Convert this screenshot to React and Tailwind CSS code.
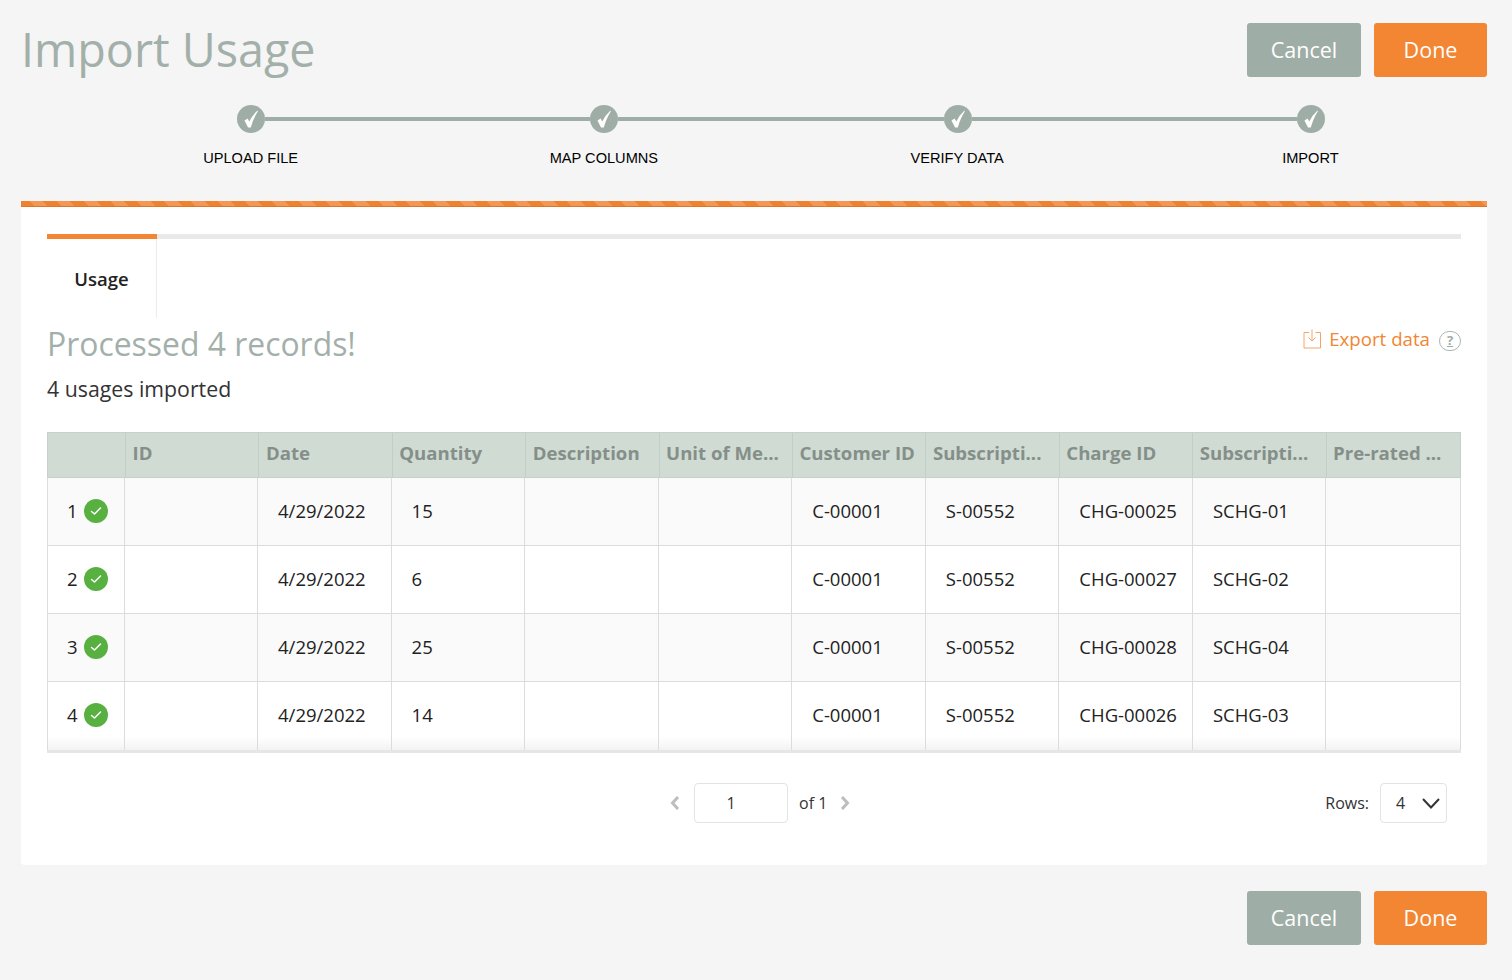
const steps = ['UPLOAD FILE', 'MAP COLUMNS', 'VERIFY DATA', 'IMPORT'];
const columns = [
  'ID',
  'Date',
  'Quantity',
  'Description',
  'Unit of Me...',
  'Customer ID',
  'Subscripti...',
  'Charge ID',
  'Subscripti...',
  'Pre-rated ...',
];
const rows = [
  { n: 1, qty: '15', charge: 'CHG-00025', sub: 'SCHG-01' },
  { n: 2, qty: '6', charge: 'CHG-00027', sub: 'SCHG-02' },
  { n: 3, qty: '25', charge: 'CHG-00028', sub: 'SCHG-04' },
  { n: 4, qty: '14', charge: 'CHG-00026', sub: 'SCHG-03' },
];

const Buttons = () => (
  <div className="flex gap-[13px]">
    <button className="w-[114px] h-[54px] rounded-[3px] bg-[#9fada7] text-white text-[21.5px]">Cancel</button>
    <button className="w-[113px] h-[54px] rounded-[3px] bg-[#f28633] text-white text-[21.5px]">Done</button>
  </div>
);

const StepCircle = () => (
  <div className="w-[28px] h-[28px] rounded-full bg-[#9fada7] flex items-center justify-center shrink-0">
    <svg width="14" height="18" viewBox="0 0 14 18">
      <path d="M0.5 10.5 L3.6 8.5 L5.3 11.5 Q8 5.5 13.5 0.5 L13.8 1.5 Q9.5 8 6.8 17.5 L4 17.5 Z" fill="#fff" />
    </svg>
  </div>
);

const Arrow = ({ d }) => (
  <svg width="10" height="14" viewBox="0 0 10 14" fill="none" stroke="#bdbdbd" strokeWidth="3">
    <path d={d} />
  </svg>
);

const Cell = ({ children, pad = 'pl-[20px]' }) => (
  <div className={`border-r border-[#dcdcdc] flex items-center pb-[2px] text-[18.5px] text-[#222] ${pad}`}>{children}</div>
);

const App = () => {
  return (
    <div className="w-[1512px] h-[980px] bg-[#f5f5f5] font-['Open_Sans',sans-serif] overflow-hidden pl-[21px] pr-[25px]">
      <div className="flex justify-between h-[77px] items-end">
        <h1 className="self-start pt-[17px] text-[46.7px] leading-[64px] font-normal text-[#a3b0aa]">Import Usage</h1>
        <Buttons />
      </div>

      <div className="flex items-center mt-[28px] ml-[216px] mr-[162px]">
        {steps.map((s, i) => (
          <div key={s} className={i < 3 ? 'flex items-center flex-1' : 'flex items-center'}>
            <StepCircle />
            {i < 3 && <div className="h-[4px] flex-1 bg-[#9fada7]" />}
          </div>
        ))}
      </div>
      <div className="flex mt-[15px] ml-[53px] font-['Liberation_Sans',sans-serif] text-[14.6px] leading-[20px] text-black">
        {steps.map((s) => (
          <div key={s} className="flex-1 text-center">{s}</div>
        ))}
      </div>

      <div className="mt-[33px] bg-white rounded-b-[4px] h-[664px]">
        <div className="h-[6px] bg-[repeating-linear-gradient(45deg,#ee8230_0,#ee8230_9.5px,#f29756_9.5px,#f29756_19px)] border-b border-[#dc762a]" />
        <div className="px-[26px] pt-[27px]">
          <div className="h-[5px] bg-[#e9e9e9]">
            <div className="w-[110px] h-[5px] bg-[#f28633]" />
          </div>
          <div className="w-[110px] h-[79px] border-r border-[#ececec] flex items-center justify-center text-[18.5px] font-semibold text-[#222]">
            Usage
          </div>

          <div className="flex justify-between">
            <div>
              <h2 className="pt-[1px] text-[31.9px] leading-[50px] font-normal text-[#a3b0aa]">Processed 4 records!</h2>
              <p className="text-[21.3px] leading-[30px] text-[#333] mt-[5px]">4 usages imported</p>
            </div>
            <div className="flex items-center h-[42px] gap-[9px] text-[#f28633] text-[18.7px]">
              <div className="flex items-center gap-[8px]">
                <svg width="18" height="20" viewBox="0 0 18 20" fill="none" stroke="#f5a468" strokeWidth="1">
                  <path d="M6 3.5 H1 V19 H17.5 V3.5 H12.5" />
                  <path d="M9 0.5 V12 M5.5 8.5 L9 12 L12.5 8.5" />
                </svg>
                <span>Export data</span>
              </div>
              <div className="w-[22px] h-[20px] rounded-full border border-[#a9b6b1] flex items-center justify-center text-[13px] font-bold underline text-[#9fada7] mt-[4px]">?</div>
            </div>
          </div>

          <div className="mt-[28px] border-b-[3px] border-[#e6e6e6]">
            <div className="grid grid-cols-[78px_repeat(10,1fr)] h-[46px] bg-[#d0dbd3] border border-[#c5d1c9]">
              <div className="border-r border-[#c2cec6]" />
              {columns.map((c, i) => (
                <div key={i} className="border-r border-[#c2cec6] last:border-r-0 flex items-center pl-[6.5px] pb-[4px] text-[18.6px] font-bold text-[#858f89] whitespace-nowrap overflow-hidden">
                  {c}
                </div>
              ))}
            </div>
            {rows.map((r, i) => (
              <div
                key={r.n}
                className={`grid grid-cols-[76.5px_repeat(10,1fr)] h-[68px] border-l border-r border-[#dcdcdc] ${i < 3 ? 'border-b' : 'bg-[linear-gradient(#fff_80%,#f3f3f3)]'} ${i % 2 === 0 ? 'bg-[#fafafa]' : 'bg-white'}`}
              >
                <Cell pad="pl-[19px] gap-[6px]">
                  <span>{r.n}</span>
                  <span className="w-[24px] h-[24px] rounded-full bg-[#58b041] flex items-center justify-center">
                    <svg width="14" height="12" viewBox="0 0 14 12" fill="none" stroke="#fff" strokeWidth="1.5" strokeLinecap="round" strokeLinejoin="round">
                      <path d="M2.5 6.5 L5.5 9 L11.5 3" />
                    </svg>
                  </span>
                </Cell>
                <Cell />
                <Cell>4/29/2022</Cell>
                <Cell>{r.qty}</Cell>
                <Cell />
                <Cell />
                <Cell>C-00001</Cell>
                <Cell>S-00552</Cell>
                <Cell>{r.charge}</Cell>
                <Cell>{r.sub}</Cell>
                <div />
              </div>
            ))}
          </div>

          <div className="flex items-center justify-between mt-[30px] h-[40px] pl-[623px] pr-[14px]">
            <div className="flex items-center text-[16px] text-[#333]">
              <Arrow d="M8 1 L2.5 7 L8 13" />
              <div className="ml-[14px] w-[94px] h-[40px] border border-[#e3e3e3] rounded-[4px] flex items-center justify-center pr-[20px]">1</div>
              <span className="ml-[11px]">of 1</span>
              <div className="ml-[13px]">
                <Arrow d="M2 1 L7.5 7 L2 13" />
              </div>
            </div>
            <div className="flex items-center text-[16px] text-[#333]">
              <span>Rows:</span>
              <div className="ml-[11px] w-[67px] h-[40px] border border-[#e3e3e3] rounded-[4px] flex items-center justify-between pl-[15px] pr-[6px]">
                <span>4</span>
                <svg width="18" height="11" viewBox="0 0 18 11" fill="none" stroke="#333" strokeWidth="2">
                  <path d="M1 1 L9 9.5 L17 1" />
                </svg>
              </div>
            </div>
          </div>
        </div>
      </div>

      <div className="flex justify-end mt-[26px]">
        <Buttons />
      </div>
    </div>
  );
};

export default App;
